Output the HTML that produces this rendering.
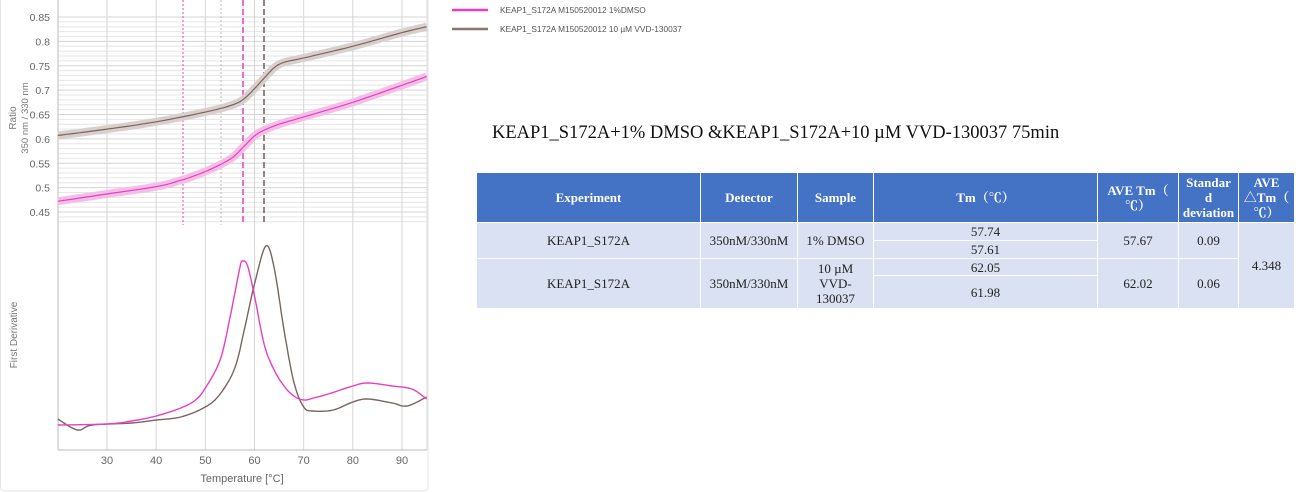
<!DOCTYPE html>
<html><head><meta charset="utf-8"><style>
body{margin:0;width:1296px;height:493px;background:#fff;overflow:hidden;position:relative;font-family:"Liberation Sans","DejaVu Sans",sans-serif}
svg{position:absolute;left:0;top:0}
.title{position:absolute;left:492px;top:123px;font-family:"Liberation Serif",serif;font-size:18.5px;color:#111;white-space:nowrap}
table{position:absolute;left:476px;top:172px;border-collapse:collapse;table-layout:fixed;width:818px;font-family:"Liberation Serif","Noto Serif CJK SC",serif;font-size:13px;color:#222}
td,th{border:1.5px solid #fff;text-align:center;padding:0;line-height:15px;overflow:hidden;white-space:nowrap}
th{background:#4472c4;color:#fff;font-weight:bold}
td{background:#d9e1f2}
</style></head><body>
<svg id="s" width="1296" height="493" xmlns="http://www.w3.org/2000/svg">
<rect x="0.5" y="-2" width="427.5" height="493" rx="4" fill="none" stroke="#e4e4e4"/>
<g id="grid"></g>
<g font-size="10.5" fill="#666" text-anchor="end" id="ylab"></g>
<text transform="translate(16,118) rotate(-90)" font-size="10" fill="#777" text-anchor="middle">Ratio</text>
<text transform="translate(28,118) rotate(-90)" font-size="9.5" fill="#777" text-anchor="middle">350 nm / 330 nm</text>
<text transform="translate(17,335) rotate(-90)" font-size="10" fill="#777" text-anchor="middle">First Derivative</text>
<g font-size="11" fill="#666" text-anchor="middle" id="xlab"></g>
<text x="242" y="482" font-size="11" fill="#666" text-anchor="middle">Temperature [°C]</text>
<g id="curves"></g>
<line x1="452" y1="10" x2="488" y2="10" stroke="#e83fbf" stroke-width="2.5"/>
<line x1="452" y1="29" x2="488" y2="29" stroke="#8a7671" stroke-width="2.5"/>
<text x="500" y="13" font-size="8.3" fill="#555">KEAP1_S172A M150520012 1%DMSO</text>
<text x="500" y="32" font-size="8.3" fill="#555">KEAP1_S172A M150520012 10 µM VVD-130037</text>
</svg>
<div class="title">KEAP1_S172A+1% DMSO &amp;KEAP1_S172A+10 µM VVD-130037 75min</div>
<table>
<colgroup><col style="width:224px"><col style="width:97px"><col style="width:76px"><col style="width:224px"><col style="width:81px"><col style="width:60px"><col style="width:56px"></colgroup>
<tr style="height:50px"><th>Experiment</th><th>Detector</th><th>Sample</th><th>Tm（℃）</th><th>AVE Tm（<br>℃）</th><th>Standar<br>d<br>deviation</th><th>AVE<br>△Tm（<br>℃）</th></tr>
<tr style="height:18px"><td rowspan="2">KEAP1_S172A</td><td rowspan="2">350nM/330nM</td><td rowspan="2">1% DMSO</td><td>57.74</td><td rowspan="2">57.67</td><td rowspan="2">0.09</td><td rowspan="4">4.348</td></tr>
<tr style="height:18px"><td>57.61</td></tr>
<tr style="height:17px"><td rowspan="2">KEAP1_S172A</td><td rowspan="2">350nM/330nM</td><td rowspan="2">10 µM<br>VVD-<br>130037</td><td>62.05</td><td rowspan="2">62.02</td><td rowspan="2">0.06</td></tr>
<tr style="height:33px"><td>61.98</td></tr>
</table>
<script>
var NS="http://www.w3.org/2000/svg";
function X(t){return 107+(t-30)*4.917}
function Y(v){return 17+(0.85-v)*487.5}
function el(p,tag,a,txt){var e=document.createElementNS(NS,tag);for(var k in a)e.setAttribute(k,a[k]);if(txt)e.textContent=txt;document.getElementById(p).appendChild(e);return e}
for(var i=0;i<=42;i++){var v=0.43+i*0.01;var y=Y(v);var r=Math.round(v*100)%5;var maj=r==0;
el("grid","line",{x1:58,x2:427,y1:y,y2:y,stroke:maj?"#d4d4d4":"#e6e6e6","stroke-width":1})}
for(var t=30;t<=90;t+=10){el("grid","line",{x1:X(t),x2:X(t),y1:0,y2:450,stroke:"#d6d6d6"})}
el("grid","line",{x1:58,x2:58,y1:0,y2:450,stroke:"#bbb"});
el("grid","line",{x1:427,x2:427,y1:0,y2:450,stroke:"#ddd"});
el("grid","line",{x1:58,x2:427,y1:450,y2:450,stroke:"#bbb"});
el("grid","line",{x1:183,x2:183,y1:0,y2:225,stroke:"#e83fbf","stroke-dasharray":"2,2"});
el("grid","line",{x1:221,x2:221,y1:0,y2:225,stroke:"#bbb","stroke-dasharray":"2,2"});
el("grid","line",{x1:243,x2:243,y1:0,y2:225,stroke:"#e83fbf","stroke-width":1.5,"stroke-dasharray":"6,3"});
el("grid","line",{x1:264,x2:264,y1:0,y2:225,stroke:"#6e5d5a","stroke-width":1.5,"stroke-dasharray":"6,3"});
["0.85","0.8","0.75","0.7","0.65","0.6","0.55","0.5","0.45"].forEach(function(s){el("ylab","text",{x:50,y:Y(+s)+4},s)});
for(var t=30;t<=90;t+=10)el("xlab","text",{x:X(t),y:464},""+t);
function path(pts,f){var d="";pts.forEach(function(p,i){d+=(i?"L":"M")+X(p[0]).toFixed(1)+","+f(p[1]).toFixed(1)});return d}
function smooth(pts){var out=[];for(var i=0;i<pts.length-1;i++){var p0=pts[Math.max(0,i-1)],p1=pts[i],p2=pts[i+1],p3=pts[Math.min(pts.length-1,i+2)];for(var s=0;s<8;s++){var u=s/8,u2=u*u,u3=u2*u;var f=function(a,b,c,d){return 0.5*((2*b)+(-a+c)*u+(2*a-5*b+4*c-d)*u2+(-a+3*b-3*c+d)*u3)};out.push([f(p0[0],p1[0],p2[0],p3[0]),f(p0[1],p1[1],p2[1],p3[1])])}}out.push(pts[pts.length-1]);return out}
var id=function(v){return v};
var gT=smooth([[20,.607],[30,.62],[40,.635],[50,.655],[55,.668],[57.6,.68],[60,.703],[62,.725],[64,.746],[66,.757],[70,.766],[80,.79],[90,.818],[95,.83]]);
var pT=smooth([[20,.472],[30,.487],[40,.502],[45,.515],[50,.533],[55,.558],[57.6,.582],[60,.606],[62,.618],[65,.63],[70,.645],[80,.675],[90,.71],[95,.728]]);
var pD=smooth([[20,425],[30,424],[35,421],[40,416],[45,408],[48,400],[50,388],[53,360],[55,318],[57,268],[57.6,261],[58.6,266],[60,296],[62,345],[64,370],[66,386],[68,396],[70,400],[72,398],[75,394],[80,386],[83,383],[88,386],[92,389],[95,399]]);
var gD=smooth([[20,419],[24,430],[27,425],[35,423],[40,420],[45,417],[50,407],[53,394],[56,368],[58,328],[60,284],[62.3,246],[64,268],[66,330],[68,382],[70,407],[72,411],[76,410],[80,402],[83,399],[88,403],[91,406],[95,397]]);
el("curves","path",{d:path(gT,Y),fill:"none",stroke:"#d9cfcd","stroke-width":8,"stroke-linejoin":"round"});
el("curves","path",{d:path(pT,Y),fill:"none",stroke:"#f4bfe6","stroke-width":8,"stroke-linejoin":"round"});
el("curves","path",{d:path(gT,Y),fill:"none",stroke:"#7a6461","stroke-width":1.2});
el("curves","path",{d:path(pT,Y),fill:"none",stroke:"#e83fbf","stroke-width":1.2});
el("curves","path",{d:path(gD,id),fill:"none",stroke:"#7a6461","stroke-width":1.4});
el("curves","path",{d:path(pD,id),fill:"none",stroke:"#e83fbf","stroke-width":1.4});
</script>
</body></html>
